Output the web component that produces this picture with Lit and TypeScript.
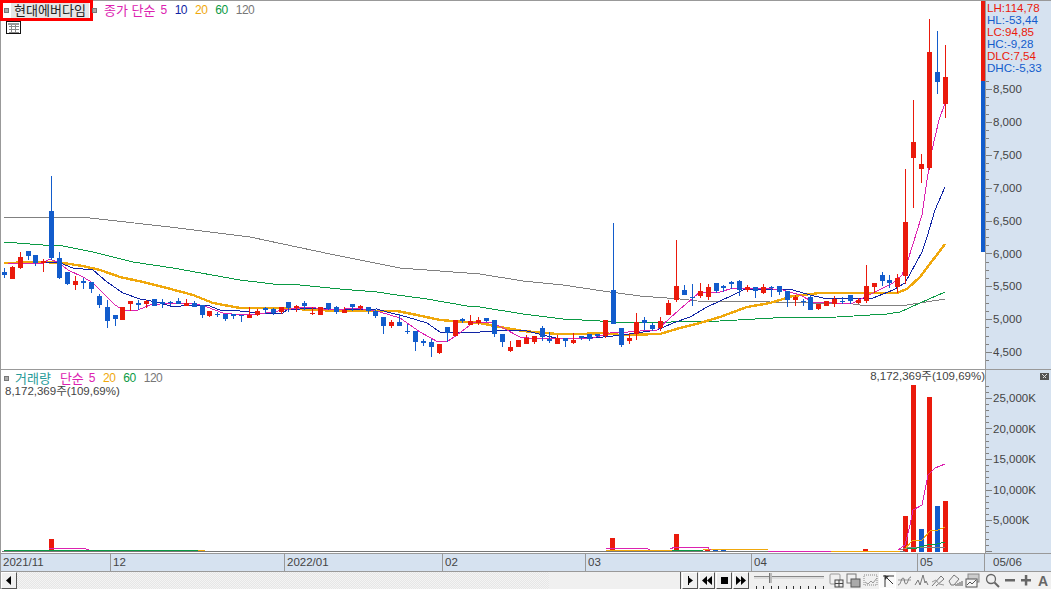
import { LitElement, html, svg, css } from 'lit';
import { customElement } from 'lit/decorators.js';

type Pt = [number, number];
// red?, high, body top, body bottom, low
type Candle = [number, number, number, number, number];

const RED = '#ea1a0c';
const BLUE = '#125ccc';
const MAGENTA = '#dc22b0';
const NAVY = '#1024a4';
const ORANGE = '#f0a80c';
const GREEN = '#0a9a44';
const GRAY = '#808080';

const candles: Candle[] = [
  [0,268,272,275,278],[1,266,267,279,279],[1,252,257,268,269],[0,251,251,256,260],[0,255,255,263,266],
  [1,259,261,263,272],[0,176,211,258,260],[0,252,258,278,279],[0,272,272,284,285],[1,276,281,285,290],
  [0,278,281,283,289],[0,282,282,289,293],[0,294,296,305,308],[0,300,307,321,328],[0,315,315,319,326],
  [1,307,307,320,320],[1,301,301,304,311],[0,300,303,305,310],[1,300,301,304,308],[0,299,299,306,306],
  [0,299,302,304,308],[0,301,302,303,306],[0,298,301,304,304],[1,299,303,306,306],[0,301,303,307,307],
  [0,305,305,315,318],[1,311,311,316,317],[0,312,314,315,317],[0,314,314,319,321],[0,314,314,316,319],
  [0,315,315,316,322],[1,307,315,318,318],[1,309,311,315,316],[0,307,308,310,314],[0,308,309,313,315],
  [1,307,307,312,314],[0,302,302,308,312],[1,305,306,308,312],[0,301,303,306,310],[1,307,313,314,315],
  [1,307,307,315,315],[0,303,303,309,310],[0,306,307,312,314],[1,307,310,313,313],[0,304,304,307,311],
  [1,305,306,308,310],[0,307,307,311,314],[0,309,311,316,318],[0,317,317,326,334],[1,320,322,326,328],
  [0,314,322,326,326],[0,324,331,332,334],[0,331,331,342,351],[0,339,341,343,346],[0,339,342,347,357],
  [1,344,344,353,354],[0,327,327,333,342],[1,320,320,336,336],[0,318,319,321,323],[1,315,321,325,325],
  [1,317,320,323,325],[0,318,318,321,322],[0,320,320,334,337],[0,334,334,342,347],[1,341,347,351,352],
  [1,340,340,347,347],[1,335,338,344,344],[1,336,336,342,344],[0,326,328,337,341],[0,332,339,341,343],
  [1,335,338,344,344],[0,338,338,341,347],[1,333,340,343,344],[0,336,336,338,340],[0,334,334,339,341],
  [0,334,334,336,337],[1,320,320,336,338],[0,223,290,324,324],[0,328,328,345,347],[1,333,338,341,344],
  [1,313,322,334,340],[0,317,320,323,330],[0,323,325,329,331],[1,317,321,328,331],[1,300,303,315,315],
  [1,240,286,300,302],[0,285,290,295,295],[0,284,297,298,306],[1,283,291,296,298],[1,284,287,297,300],
  [0,283,283,291,293],[0,285,286,288,292],[0,281,282,284,289],[0,280,281,290,296],[1,285,287,290,292],
  [0,287,287,291,298],[1,284,287,293,294],[0,286,287,288,297],[0,286,286,292,295],[0,291,291,300,307],
  [1,295,297,300,306],[0,299,301,302,306],[0,295,297,310,310],[1,304,304,309,310],[1,301,301,306,306],
  [1,296,299,304,307],[0,297,301,302,304],[0,295,295,301,304],[1,298,300,303,304],[1,265,286,301,303],
  [1,283,283,287,293],[0,272,275,281,286],[0,275,280,283,288],[1,274,278,287,293],[1,169,222,276,284],
  [1,100,142,158,208],[1,154,164,169,183],[1,19,52,168,170],[0,31,72,82,94],[1,45,77,104,118],
];

const ma5: Pt[] = [[8,264],[43,263],[50,259],[59,263],[68,270],[83,277],[93,283],[103,293],[115,305],[125,311],[138,310],[150,305],[170,303],[193,303],[207,307],[223,313],[240,315],[260,314],[273,312],[283,310],[307,307],[333,310],[357,308],[380,312],[400,318],[420,332],[438,342],[448,341],[457,335],[473,323],[490,322],[503,328],[520,337],[537,339],[557,338],[577,339],[593,338],[603,335],[613,332],[628,332],[640,331],[657,330],[670,318],[687,303],[700,292],[720,292],[733,288],[763,288],[783,290],[800,295],[813,302],[837,303],[853,303],[873,293],[893,283],[902,275],[908,260],[922,215],[927,180],[932,150],[939,120],[945,103]];
const ma10: Pt[] = [[46,262],[60,263],[73,268],[93,270],[107,282],[123,293],[140,299],[157,302],[173,307],[190,305],[207,305],[220,310],[240,311],[260,313],[283,313],[287,310],[313,308],[340,310],[377,309],[387,312],[407,317],[427,323],[440,332],[453,333],[480,332],[507,330],[527,331],[543,335],[560,339],[580,338],[603,337],[623,335],[643,332],[657,330],[673,323],[690,317],[707,307],[720,301],[733,295],[743,290],[770,289],[793,290],[810,295],[823,298],[853,299],[873,298],[893,290],[905,283],[922,252],[927,237],[935,210],[945,187]];
const ma20: Pt[] = [[4,263],[43,262],[63,263],[83,266],[100,270],[120,277],[143,282],[167,288],[193,295],[213,303],[240,308],[273,308],[340,311],[397,311],[417,315],[440,320],[480,323],[500,327],[523,331],[557,334],[580,334],[603,333],[620,335],[660,334],[680,328],[700,323],[720,317],[747,307],[770,303],[793,296],[820,293],[897,293],[907,289],[920,277],[945,244]];
const ma60: Pt[] = [[4,242],[43,245],[63,246],[93,252],[133,262],[173,268],[240,280],[273,284],[300,285],[340,289],[377,292],[397,295],[427,299],[467,306],[480,307],[523,314],[563,319],[600,321],[623,323],[720,321],[773,318],[837,317],[887,314],[900,312],[920,303],[945,292]];
const ma120: Pt[] = [[3,217],[90,218],[170,227],[250,237],[330,254],[400,268],[480,274],[523,281],[563,285],[603,291],[640,296],[680,299],[697,301],[770,302],[853,304],[860,305],[907,305],[920,303],[945,299]];

const priceTicks = [8500, 8000, 7500, 7000, 6500, 6000, 5500, 5000, 4500];
const volumeTicks = [25000, 20000, 15000, 10000, 5000];

const volumeBars: [number, number, string][] = [
  [49, 539, RED], [610, 538, RED], [674, 534, RED], [705, 550, RED], [713, 550, BLUE], [721, 550, BLUE],
  [863, 549, RED], [903, 516, RED], [911, 385, RED], [919, 529, BLUE], [927, 397, RED], [935, 506, BLUE], [943, 501, RED],
];
const volumeLines: [Pt[], string][] = [
  [[[4, 550], [198, 550]], GREEN],
  [[[198, 550], [205, 550]], ORANGE],
  [[[606, 550], [672, 550]], ORANGE],
  [[[672, 550], [703, 550]], GREEN],
  [[[703, 549], [768, 549]], ORANGE],
  [[[768, 551], [831, 551]], MAGENTA],
  [[[831, 551], [900, 551]], ORANGE],
  [[[49, 549], [55, 548], [85, 548], [86, 549], [89, 549]], MAGENTA],
  [[[606, 549], [612, 548], [647, 548], [648, 549], [650, 549]], MAGENTA],
  [[[670, 549], [675, 547], [708, 547], [709, 549], [711, 549]], MAGENTA],
  [[[900, 550], [910, 547], [945, 547]], GRAY],
  [[[898, 550], [905, 545], [910, 525], [913, 510], [922, 505], [928, 475], [935, 468], [945, 464]], MAGENTA],
  [[[905, 549], [912, 541], [922, 540], [930, 531], [938, 530], [945, 527]], ORANGE],
  [[[907, 549], [917, 548], [927, 545], [937, 544], [945, 542]], GREEN],
];

const dates: [string, number][] = [
  ['2021/11', 110], ['12', 174], ['2022/01', 158], ['02', 143], ['03', 166], ['04', 166], ['05', 67],
];

const info: [string, string][] = [
  ['LH:114,78', RED], ['HL:-53,44', BLUE], ['LC:94,85', RED], ['HC:-9,28', BLUE], ['DLC:7,54', RED], ['DHC:-5,33', BLUE],
];

const fmt = (n: number) => n.toLocaleString('en-US');
const pts = (p: Pt[]) => p.map((q) => q.join(',')).join(' ');
const cx = (i: number) => Math.floor(4.3 + 7.908 * i);

function line(p: Pt[], color: string, w = 1) {
  return svg`<polyline points=${pts(p)} fill="none" stroke=${color} stroke-width=${w}></polyline>`;
}

function candle(c: Candle, i: number) {
  const x = cx(i);
  const color = c[0] ? RED : BLUE;
  return svg`<rect x=${x} y=${c[1]} width="1" height=${c[4] - c[1]} fill=${color}></rect>
    <rect x=${x - 2} y=${c[2]} width="5" height=${Math.max(1, c[3] - c[2])} fill=${color}></rect>`;
}

// axis marks: every "major"-th one, counted from "shift", is the long one next to a label
function ticks(first: number, last: number, step: number, major: number, shift: number) {
  const out = [];
  for (let k = 0, y = first; y <= last; k++, y = first + k * step) {
    const long = k % major === shift;
    out.push(svg`<rect x="986" y=${Math.round(y)} width=${long ? 6 : 3} height="1" fill="#808080"></rect>`);
  }
  return out;
}

const icons = [
  svg`<rect x="1" y="1" width="10" height="10" rx="1" fill="none" stroke="#999"/><rect x="6" y="7" width="8" height="7" fill="#eee" stroke="#444"/><path d="M10 7v7M6 10.5h8" stroke="#444"/>`,
  svg`<rect x="1" y="1" width="9" height="9" fill="none" stroke="#777"/><rect x="5" y="6" width="9" height="8" fill="#aaa" stroke="#555"/>`,
  svg`<rect x="1" y="2" width="13" height="10" fill="none" stroke="#888" stroke-dasharray="1 1"/><path d="M2 9l3 2 3-3 2 2 4-5" fill="none" stroke="#999"/>`,
  svg`<path d="M3 3h11M5 2v12M6 4l7 7" fill="none" stroke="#333"/><path d="M5 3h4L5 7z" fill="#333"/>`,
  svg`<path d="M1 7h13" stroke="#999"/><path d="M1 12c3 0 3-7 5-7s1 6 3 6 2-7 5-7" fill="none" stroke="#777"/>`,
  svg`<path d="M1 12l3-5 2 5 3-10 2 8 1-2 2 4" fill="none" stroke="#777"/>`,
  svg`<path d="M1 13L10 3l3 3-8 7" fill="none" stroke="#777"/><path d="M1 9l4-2 3 4 5 1" fill="none" stroke="#999"/>`,
  svg`<path d="M1 8l5-6 5 4-5 6H3z" fill="#eee" stroke="#777"/><path d="M8 13v-2M10 13v-3M12 13v-4M14 13V8" stroke="#555"/>`,
  svg`<rect x="3" y="1" width="11" height="8" fill="#ccc" stroke="#888"/><rect x="1" y="6" width="11" height="8" fill="#f4f4f4" stroke="#555"/><path d="M2 12l3-3 2 2 4-4" fill="none" stroke="#555"/>`,
];

@customElement('app-root')
export class AppRoot extends LitElement {
  static styles = css`
    :host {
      display: block;
      width: 1051px;
      height: 589px;
      overflow: hidden;
      background: #fff;
      font: 12px 'Liberation Sans', 'Noto Sans CJK KR', sans-serif;
      color: #444;
    }
    .frame {
      border-top: 1px solid #999;
      border-left: 1px solid #999;
    }
    .pane {
      display: grid;
      grid-template-columns: 984px 66px;
      border-bottom: 1px solid #999;
    }
    .price { height: 368px; }
    .volume { height: 183px; }
    .plot {
      position: relative;
      background: #fff;
    }
    .plot svg, .axis svg {
      display: block;
      shape-rendering: crispEdges;
    }
    .axis {
      position: relative;
      background: #d6e2f0;
      border-left: 1px solid #999;
    }
    .axis text {
      font: 11.5px 'Liberation Sans', sans-serif;
      fill: #444;
      shape-rendering: auto;
    }
    .legend {
      position: absolute;
      display: flex;
      align-items: center;
      height: 21px;
      line-height: 13px;
      white-space: nowrap;
    }
    .legend.top { left: -1px; top: -1px; }
    .legend.bottom { left: 3px; top: -2px; }
    .stock {
      box-sizing: border-box;
      width: 93px;
      height: 21px;
      border: 3px solid #f00;
      display: flex;
      align-items: center;
      gap: 2px;
      padding-left: 1px;
      background: #fff;
    }
    .mark {
      width: 5px;
      height: 5px;
      flex: none;
      background: #aaa;
      border: 1px solid #777;
      box-sizing: border-box;
    }
    .stock-name {
      width: 78px;
      height: 15px;
      line-height: 15px;
      font-size: 13px;
      text-align: center;
      background: #e6e6e6;
      color: #222;
      white-space: nowrap;
    }
    .after { margin-left: -1px; }
    .series {
      display: flex;
      gap: 8px;
      margin-left: 7px;
    }
    .bottom .series { margin-left: 6px; }
    .series span { letter-spacing: -0.5px; }
    .series .ko {
      font-size: 13px;
      letter-spacing: 0;
      margin-right: -3px;
    }
    .bottom .series .name { margin-right: 1px; }
    .grid-icon {
      position: absolute;
      left: 5px;
      top: 20px;
    }
    .note {
      position: absolute;
      font-size: 11.5px;
      line-height: 14px;
      white-space: nowrap;
    }
    .note.right { right: 0; top: -1px; }
    .note.left { left: 4px; top: 14px; }
    .info {
      position: absolute;
      left: 1px;
      top: 1px;
      font-size: 11.6px;
      line-height: 12px;
    }
    .close {
      position: absolute;
      right: 2px;
      top: 3px;
      width: 9px;
      height: 7px;
      background: #555;
    }
    .close svg { display: block; }
    .dates {
      display: flex;
      height: 17px;
      background: #d6e2f0;
      border-bottom: 1px solid #999;
      font-size: 11.5px;
      line-height: 17px;
    }
    .dates div {
      box-sizing: border-box;
      padding-left: 2px;
      border-right: 1px solid #999;
    }
    .dates .last {
      border-right: none;
      padding-left: 8px;
      flex: 1;
    }
    .toolbar {
      display: flex;
      align-items: stretch;
      height: 17px;
      background: #f0f0f0;
    }
    .btn {
      box-sizing: border-box;
      width: 16px;
      flex: none;
      display: flex;
      align-items: center;
      justify-content: center;
      background: #f0f0f0;
      border: 1px solid;
      border-color: #fff #555 #555 #fff;
    }
    .track {
      width: 532px;
      flex: none;
      background: repeating-conic-gradient(#f4f4f4 0 25%, #e6e6e6 0 50%) 0 0 / 2px 2px;
    }
    .thumb {
      width: 132px;
      flex: none;
      background: #f0f0f0;
      border-right: 1px solid #555;
      box-sizing: border-box;
    }
    .player { display: flex; gap: 1px; margin-left: 1px; }
    .slider {
      width: 72px;
      margin-left: 5px;
      margin-right: 3px;
      flex: none;
    }
    .slider svg { display: block; shape-rendering: crispEdges; }
    .tools { display: flex; align-items: center; gap: 2px; }
    .tool {
      width: 15px;
      height: 15px;
      display: block;
      flex: none;
    }
    .tool.active {
      background: #fafafa;
      outline: 1px solid #fff;
    }
    .zoom { display: flex; align-items: center; margin-left: 5px; }
    .zoom svg { display: block; flex: none; }
    .zoom b {
      font: bold 14px 'Liberation Sans', sans-serif;
      color: #666;
      margin-left: 5px;
    }
  `;

  private renderPlayer() {
    return html`<div class="player">
      <div class="btn"><svg width="8" height="9"><path d="M2 0h1v9H2zM3 1.500l4 3-4 3z" fill="#000"></path></svg></div>
      <div class="btn"><svg width="12" height="9"><path d="M6 0v9L1 4.500zM11 0v9L6 4.500z" fill="#000"></path></svg></div>
      <div class="btn"><svg width="9" height="9"><rect x="1" y="1" width="7" height="7" fill="#000"></rect></svg></div>
      <div class="btn"><svg width="12" height="9"><path d="M1 0v9l5-4.500zM6 0v9l5-4.500z" fill="#000"></path></svg></div>
    </div>`;
  }

  private renderSlider() {
    const marks = [];
    for (let i = 0; i < 10; i++) marks.push(svg`<rect x=${2 + i * 7.4} y="14" width="1" height="3" fill="#333"></rect>`);
    return html`<div class="slider"><svg width="72" height="17">
      <rect x="0" y="4" width="70" height="1" fill="#888"></rect>
      <rect x="0" y="5" width="70" height="2" fill="#ddd"></rect>
      <rect x="15" y="1" width="3" height="10" fill="#bbb"></rect>
      <rect x="15" y="1" width="1" height="10" fill="#777"></rect>
      ${marks}
    </svg></div>`;
  }

  render() {
    return html`<div class="frame">
      <section class="pane price">
        <div class="plot">
          <svg width="984" height="368" viewBox="1 1 984 368">
            ${line(ma120, GRAY)}
            ${line(ma60, GREEN)}
            ${line(ma20, ORANGE, 2.4)}
            ${line(ma10, NAVY)}
            ${line(ma5, MAGENTA)}
            ${candles.map(candle)}
            <rect x="981" y="1" width="4" height="80" fill=${RED}></rect>
            <rect x="981" y="81" width="4" height="171" fill=${BLUE}></rect>
          </svg>
          <div class="legend top">
            <div class="stock"><i class="mark"></i><div class="stock-name">현대에버다임</div></div>
            <i class="mark after"></i>
            <div class="series">
              <span class="ko" style="color:${MAGENTA}">종가 단순</span>
              <span style="color:${MAGENTA}">5</span>
              <span style="color:${NAVY}">10</span>
              <span style="color:${ORANGE}">20</span>
              <span style="color:${GREEN}">60</span>
              <span style="color:#777">120</span>
            </div>
          </div>
          <svg class="grid-icon" width="15" height="13">
            <rect x="0.500" y="0.500" width="14" height="12" fill="#fff" stroke="#111"></rect>
            <rect x="2" y="2" width="11" height="2" fill="#999"></rect>
            <path d="M2.500 5h10M2.500 8h10M2.500 11h10M5.500 4v8M9.500 4v8" stroke="#888"></path>
          </svg>
        </div>
        <div class="axis">
          <svg width="65" height="368" viewBox="986 1 65 368">
            ${ticks(80.78, 368, 8.22, 4, 1)}
            ${priceTicks.map((p, i) => svg`<text x="993" y=${93 + i * 32.9}>${fmt(p)}</text>`)}
          </svg>
          <div class="info">${info.map(([t, c]) => html`<div style="color:${c}">${t}</div>`)}</div>
        </div>
      </section>

      <section class="pane volume">
        <div class="plot">
          <svg width="984" height="183" viewBox="1 370 984 183">
            ${volumeBars.map(([x, y, c]) => svg`<rect x=${x} y=${y} width="5" height=${552 - y} fill=${c}></rect>`)}
            <rect x="2" y="551" width="903" height="1" fill="#777"></rect>
            ${volumeLines.map(([p, c]) => line(p, c))}
          </svg>
          <div class="legend bottom">
            <i class="mark"></i>
            <div class="series">
              <span class="ko name" style="color:#259a98">거래량</span>
              <span class="ko" style="color:${MAGENTA}">단순</span>
              <span style="color:${MAGENTA}">5</span>
              <span style="color:${ORANGE}">20</span>
              <span style="color:${GREEN}">60</span>
              <span style="color:#777">120</span>
            </div>
          </div>
          <div class="note right">8,172,369주(109,69%)</div>
          <div class="note left">8,172,369주(109,69%)</div>
        </div>
        <div class="axis">
          <svg width="65" height="183" viewBox="986 370 65 183">
            ${ticks(385.5, 552, 6.12, 5, 2)}
            ${volumeTicks.map((v, i) => svg`<text x="993" y=${402 + i * 30.6}>${fmt(v)}K</text>`)}
          </svg>
          <div class="close">
            <svg width="9" height="7"><path d="M2.500 1.500l4 4M6.500 1.500l-4 4" stroke="#ddd"></path></svg>
          </div>
        </div>
      </section>

      <div class="dates">
        ${dates.map(([d, w]) => html`<div style="width:${w}px">${d}</div>`)}
        <div class="last">05/06</div>
      </div>

      <div class="toolbar">
        <div class="btn"><svg width="8" height="9"><path d="M6 0v9L1 4.500z" fill="#000"></path></svg></div>
        <div class="track"></div>
        <div class="thumb"></div>
        ${this.renderPlayer()}
        ${this.renderSlider()}
        <div class="tools">
          ${icons.map((ic, i) => html`<svg class="tool ${i === 3 ? 'active' : ''}" viewBox="0 0 15 15">${ic}</svg>`)}
        </div>
        <div class="zoom">
          <svg width="15" height="15"><circle cx="6" cy="6" r="4.500" fill="none" stroke="#666" stroke-width="1.300"></circle><path d="M9.500 9.500l4.500 4.500" stroke="#666" stroke-width="2"></path></svg>
          <svg width="12" height="15" style="margin-left:5px"><rect x="0" y="6" width="10" height="2.500" fill="#666"></rect></svg>
          <svg width="12" height="15" style="margin-left:4px"><path d="M0 6h10v2.500H0zM3.800 2h2.500v10.500H3.800z" fill="#666"></path></svg>
          <b>A</b>
        </div>
      </div>
    </div>`;
  }
}
